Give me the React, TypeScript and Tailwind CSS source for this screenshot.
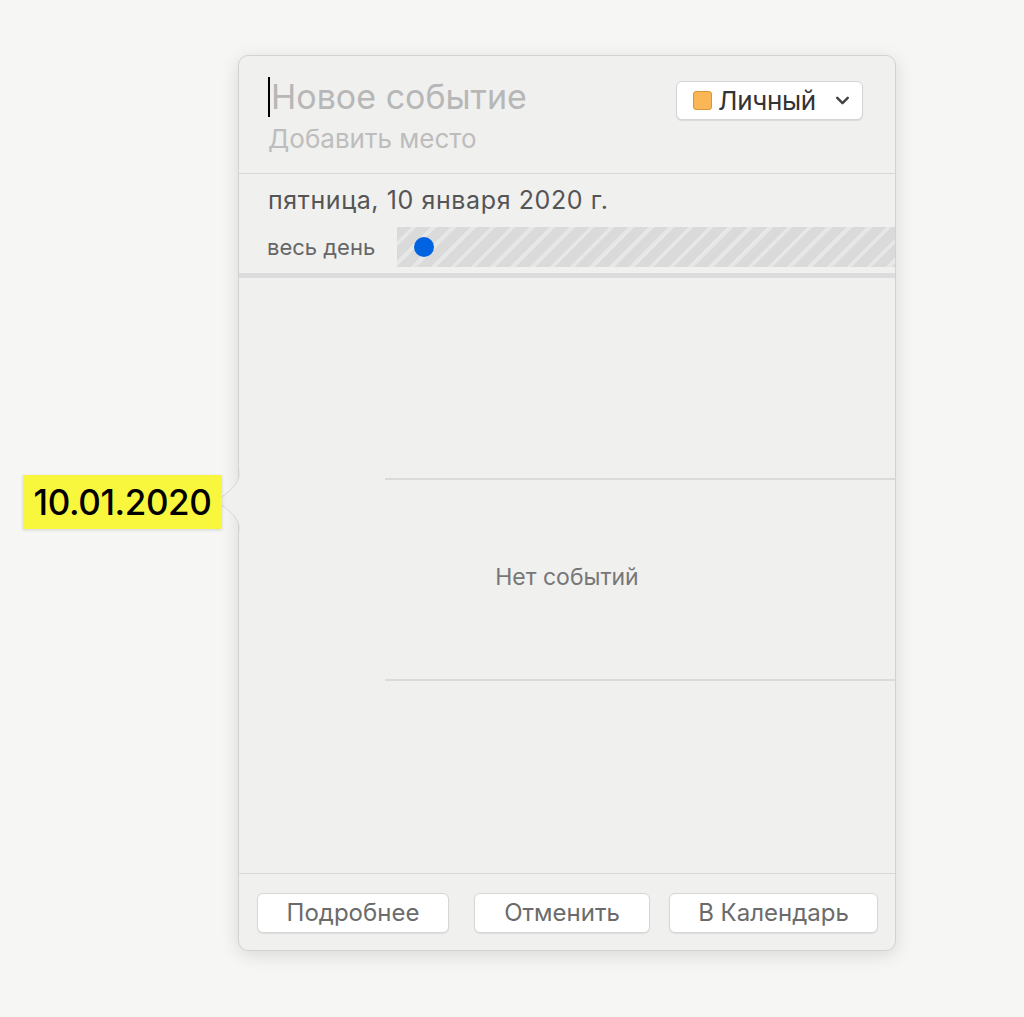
import { ChevronDown } from 'lucide-react';

function PopoverArrow() {
  return (
    <svg
      className="absolute left-[-26px] top-[413px]"
      width="28"
      height="64"
      viewBox="0 0 28 64"
    >
      <path
        d="M27 0 C27 14 20 20 3 32 C20 44 27 50 27 64"
        fill="#f0f0ef"
        stroke="#d6d6d6"
        strokeWidth="1"
      />
      <rect x="26.5" y="0" width="2" height="64" fill="#f0f0ef" />
    </svg>
  );
}

function FooterButton({ label, className }: { label: string; className: string }) {
  return (
    <button
      className={`${className} h-[40px] rounded-[6px] bg-white border border-[#d6d6d6] shadow-[0_1px_1px_rgba(0,0,0,0.08)] text-[24px] text-[#6b6b6b]`}
    >
      {label}
    </button>
  );
}

export default function App() {
  return (
    <div
      className="min-h-[1017px] w-full bg-[#f6f6f5] pt-[55px] pl-[23px] flex items-start"
      style={{ fontFamily: 'Inter, "Noto Sans", sans-serif' }}
    >
      {/* Date tag */}
      <div className="mt-[420px] w-[199px] h-[54px] bg-[#f8f73d] shadow-[0_1px_3px_rgba(0,0,0,0.15)] flex items-center justify-center text-[35px] font-medium tracking-[-0.4px] text-black z-10">
        10.01.2020
      </div>

      {/* Popover */}
      <div className="relative ml-[16px] w-[658px] h-[896px] bg-[#f0f0ef] rounded-[10px] border border-[#d2d2d2] shadow-[0_4px_18px_rgba(0,0,0,0.12)] flex flex-col">
        <PopoverArrow />

        {/* Header */}
        <div className="h-[118px] border-b border-[#d8d8d8] flex justify-between pl-[29px] pr-[32px]">
          <div className="pt-[20px]">
            <div className="flex items-center h-[42px]">
              <span className="w-[2px] h-[40px] bg-black" />
              <span className="text-[34px] text-[#b7b7b7] leading-none ml-[1px]">Новое событие</span>
            </div>
            <div className="text-[26px] leading-[32px] text-[#bdbdbd] mt-[5px]">Добавить место</div>
          </div>
          <div className="pt-[25px]">
            <div className="w-[187px] h-[39px] bg-white rounded-[6px] border border-[#d4d4d4] shadow-[0_1px_1px_rgba(0,0,0,0.1)] flex items-center pl-[16px] pr-[9px]">
              <span className="w-[19px] h-[19px] rounded-[3px] bg-[#fbb655] border border-[#d8953a]" />
              <span className="ml-[6px] text-[26px] text-[#333] tracking-[-0.3px]">Личный</span>
              <ChevronDown className="ml-auto text-[#444]" size={21} strokeWidth={2.8} />
            </div>
          </div>
        </div>

        {/* Date */}
        <div className="h-[99px] flex flex-col">
          <div className="h-[53px] flex items-center pl-[29px] text-[25px] tracking-[0.6px] text-[#555]">
            пятница, 10 января 2020 г.
          </div>
          <div className="h-[40px] flex items-stretch">
            <div className="w-[158px] pl-[28px] flex items-center text-[22px] text-[#666]">весь день</div>
            <div className="flex-1 flex items-center pl-[17px] bg-[repeating-linear-gradient(135deg,#dadada_0px,#dadada_10px,#e7e7e7_10px,#e7e7e7_14px)]">
              <span className="w-[20px] h-[20px] rounded-full bg-[#0063e1]" />
            </div>
          </div>
        </div>
        <div className="h-[5px] bg-[#dcdcdc]" />

        {/* Body */}
        <div className="flex-1 flex flex-col">
          <div className="h-[200px]" />
          <div className="ml-[146px] h-[2px] bg-[#dadada]" />
          <div className="h-[199px] pb-[4px] flex items-center justify-center text-[23px] text-[#777]">
            Нет событий
          </div>
          <div className="ml-[146px] h-[2px] bg-[#dadada]" />
          <div className="flex-1" />
        </div>

        {/* Footer */}
        <div className="h-[77px] border-t border-[#d8d8d8] flex items-start pt-[19px] pl-[18px]">
          <FooterButton label="Подробнее" className="w-[192px]" />
          <FooterButton label="Отменить" className="w-[176px] ml-[25px]" />
          <FooterButton label="В Календарь" className="w-[209px] ml-[19px]" />
        </div>
      </div>
    </div>
  );
}
